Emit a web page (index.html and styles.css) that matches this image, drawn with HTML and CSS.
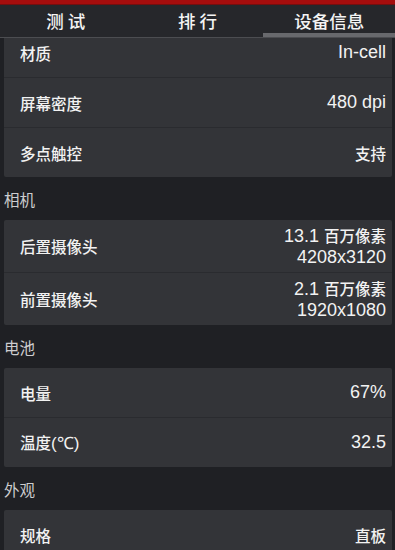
FILE: index.html
```html
<!DOCTYPE html>
<html lang="zh">
<head>
<meta charset="utf-8">
<link rel="stylesheet" href="styles.css">
</head>
<body>
<div class="app">
  <div class="topbar"></div>
  <nav class="tabs">
    <div class="tab">测 试</div>
    <div class="tab">排 行</div>
    <div class="tab active">设备信息</div>
  </nav>
  <main class="content">
    <section class="card first">
      <div class="row"><span class="label">材质</span><span class="value num">In-cell</span></div>
      <div class="row"><span class="label">屏幕密度</span><span class="value num">480 dpi</span></div>
      <div class="row"><span class="label">多点触控</span><span class="value">支持</span></div>
    </section>
    <h2 class="section">相机</h2>
    <section class="card">
      <div class="row tall"><span class="label">后置摄像头</span><span class="value multi"><span><span class="num">13.1 </span>百万像素</span><span class="num">4208x3120</span></span></div>
      <div class="row tall"><span class="label">前置摄像头</span><span class="value multi"><span><span class="num">2.1 </span>百万像素</span><span class="num">1920x1080</span></span></div>
    </section>
    <h2 class="section">电池</h2>
    <section class="card">
      <div class="row"><span class="label">电量</span><span class="value num">67%</span></div>
      <div class="row"><span class="label">温度<span class="num">(℃)</span></span><span class="value num">32.5</span></div>
    </section>
    <h2 class="section">外观</h2>
    <section class="card">
      <div class="row"><span class="label">规格</span><span class="value">直板</span></div>
    </section>
  </main>
</div>
</body>
</html>
```

FILE: styles.css
```css
html, body {
  margin: 0;
  padding: 0;
  background: #1f2024;
}
body {
  font-family: "Noto Sans CJK SC", "Liberation Sans", sans-serif;
  color: #f2f2f2;
}
.app {
  width: 395px;
  height: 550px;
  overflow: hidden;
  display: flex;
  flex-direction: column;
  background: #1f2024;
}
.topbar {
  height: 5px;
  background: linear-gradient(#a50d0d 0, #a50d0d 70%, #5a1010 100%);
  flex: none;
}
.tabs {
  display: grid;
  grid-template-columns: 1fr 1fr 1fr;
  background: #26272b;
  border-bottom: 1px solid #4c4d51;
  flex: none;
}
.tab {
  height: 28px;
  line-height: 31px;
  text-align: center;
  font-size: 17.5px;
  font-weight: 500;
  color: #f4f4f4;
  border-bottom: 4px solid transparent;
}
.tab.active {
  border-bottom-color: #68696d;
}
.content {
  flex: 1;
  overflow: hidden;
  padding-top: 1px;
}
.card {
  margin: 0 3px 0 4px;
  background: #333438;
  border-radius: 2px;
}
.card.first {
  margin-top: -11px;
}
.row {
  display: flex;
  align-items: center;
  justify-content: space-between;
  height: 49px;
  padding: 0 6px 0 16px;
  border-top: 1px solid #2a2b2f;
  font-size: 15.5px;
  font-weight: 500;
}
.row:first-child {
  border-top: none;
}
.row.tall {
  height: 42px;
  padding-top: 5px;
  padding-bottom: 5px;
}
.num {
  font-family: "Liberation Sans", sans-serif;
  font-size: 18px;
  font-weight: normal;
}
.label .num {
  font-size: 17px;
}
.value.multi {
  display: flex;
  flex-direction: column;
  align-items: flex-end;
  line-height: 21px;
}
.section {
  margin: 0;
  padding: 11px 0 9px 4px;
  height: 23px;
  line-height: 23px;
  font-size: 15.5px;
  font-weight: normal;
  color: #cdcdcf;
}
```
